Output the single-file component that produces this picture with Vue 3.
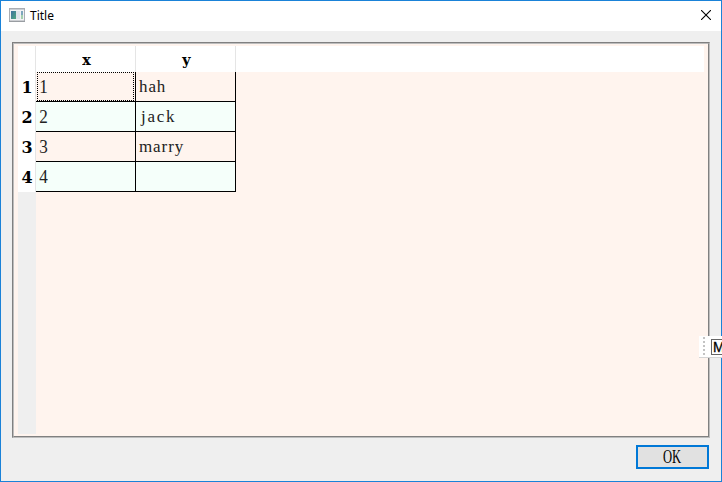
<script setup>
const columns = ['x', 'y']
const rows = [
  ['1', 'hah'],
  ['2', 'jack'],
  ['3', 'marry'],
  ['4', ''],
]
</script>

<template>
  <div class="window">
    <header class="titlebar">
      <svg class="app-icon" width="16" height="14" viewBox="0 0 16 14">
        <defs>
          <linearGradient id="pane" x1="0" y1="0" x2="1" y2="1">
            <stop offset="0" stop-color="#3f70a0" />
            <stop offset="1" stop-color="#4fa880" />
          </linearGradient>
        </defs>
        <rect x="0.5" y="0.5" width="15" height="12.5" fill="#f2f2f4" stroke="#a9adb3" />
        <rect x="1" y="1" width="14" height="1" fill="#c9ced4" />
        <rect x="2" y="3" width="5" height="8" fill="url(#pane)" />
        <rect x="7" y="3" width="4" height="8" fill="#dfe3ea" />
        <rect x="12" y="3" width="2" height="4" fill="#7da6bd" />
        <rect x="12" y="7" width="2" height="4" fill="#a4cfae" />
        <path d="M0 13.5h16" stroke="#999da2" />
      </svg>
      <span class="title">Title</span>
      <svg class="close" width="10" height="10" viewBox="0 0 10 10">
        <path d="M0 0L10 10M10 0L0 10" stroke="#000" stroke-width="1.1" />
      </svg>
    </header>
    <main class="frame">
      <div class="inner">
        <div class="head">
          <div class="corner"></div>
          <div v-for="c in columns" :key="c" class="col-head"><span>{{ c }}</span></div>
        </div>
        <div v-for="(row, i) in rows" :key="i" class="row" :class="{ alt: i % 2 }">
          <div class="row-head">{{ i + 1 }}</div>
          <div class="cell num" :class="{ focused: i === 0 }"><span>{{ row[0] }}</span></div>
          <div class="cell word"><span>{{ row[1] }}</span></div>
        </div>
        <div class="gutter"></div>
      </div>
    </main>
    <footer class="actions">
      <button class="ok"><span>OK</span></button>
    </footer>
    <div class="langbar">
      <svg class="grip" width="2" height="20" viewBox="0 0 2 20">
        <path d="M1 0V20" stroke="#c3c3c3" stroke-width="2" stroke-dasharray="2" />
      </svg>
      <div class="lang">M</div>
    </div>
  </div>
</template>

<style>
body {
  margin: 0;
  overflow: hidden;
}
</style>

<style scoped>
.window {
  position: relative;
  box-sizing: border-box;
  width: 722px;
  height: 482px;
  display: flex;
  flex-direction: column;
  background: #efefef;
  border: 1px solid #1a82d8;
  color: #000;
}
.titlebar {
  display: flex;
  align-items: center;
  height: 30px;
  box-sizing: border-box;
  padding: 0 10px 0 8px;
  background: #fff;
  font: 12px/30px "Noto Sans", sans-serif;
}
.app-icon {
  margin-top: -2px;
}
.title {
  margin-left: 5px;
}
.close {
  margin-left: auto;
  margin-top: -2px;
}
.frame {
  box-sizing: border-box;
  width: 698px;
  height: 396px;
  margin: 11px 0 0 11px;
  border: 1px solid #808080;
  border-right-color: #bdbdbd;
  border-bottom-color: #bdbdbd;
}
.inner {
  box-sizing: border-box;
  width: 696px;
  height: 394px;
  display: flex;
  flex-direction: column;
  padding: 2px 4px;
  border: 1px solid #bdbdbd;
  border-right-color: #808080;
  border-bottom-color: #808080;
  background: #fff4ee;
}
.head {
  display: flex;
  height: 26px;
  background: #fff;
}
.corner,
.row-head {
  box-sizing: border-box;
  width: 18px;
  border-right: 1px solid #e5e5e5;
  background: #fff;
}
.col-head {
  box-sizing: border-box;
  width: 100px;
  border-right: 1px solid #e5e5e5;
  text-align: center;
  font: bold 15px/28px "DejaVu Serif", serif;
  padding-left: 2px;
}
.col-head span {
  display: inline-block;
  transform: scaleX(0.95);
}
.row {
  display: flex;
  height: 30px;
}
.row-head {
  font: bold 16px/31px "DejaVu Serif", serif;
  text-align: center;
  padding-left: 1px;
}
.cell {
  box-sizing: border-box;
  width: 100px;
  padding-left: 3px;
  border-right: 1px solid #000;
  border-bottom: 1px solid #000;
  font: 18px/30px "Liberation Serif", serif;
  color: #222;
}
.cell span {
  display: inline-block;
}
.num span {
  transform: scaleX(0.95);
}
.word {
  font-size: 17px;
  letter-spacing: 0.9px;
}
.alt .word {
  padding-left: 5px;
  letter-spacing: 1.7px;
}
.alt .cell {
  background: #f5fffa;
}
.focused {
  position: relative;
}
.focused::after {
  content: "";
  position: absolute;
  inset: 0 1px 0 1px;
  border: 1px dotted #000;
}
.gutter {
  width: 18px;
  flex: 1;
  background: #efefef;
}
.actions {
  display: flex;
  justify-content: flex-end;
  padding: 7px 12px 0 0;
}
.ok {
  box-sizing: border-box;
  width: 73px;
  height: 24px;
  padding: 0 2px 0 0;
  border: 2px solid #0078d7;
  background: #e1e1e1;
  color: #000;
  font: 18px/20px "Liberation Serif", serif;
}
.ok span {
  display: inline-block;
  transform: scaleX(0.7);
}
.langbar {
  position: absolute;
  left: 698px;
  top: 335px;
  width: 23px;
  height: 22px;
  box-sizing: border-box;
  display: flex;
  padding: 1px 0 0 4px;
  overflow: hidden;
  background: #fff;
  border-bottom: 1px solid #d5d5d5;
}
.grip {
  flex: none;
}
.lang {
  flex: none;
  box-sizing: border-box;
  width: 16px;
  height: 16px;
  margin: 2px 0 0 6px;
  border: 1px solid #666;
  font: 14px/15px "Liberation Sans", sans-serif;
  -webkit-text-stroke: 0.3px #000;
  padding-left: 1px;
}
</style>
